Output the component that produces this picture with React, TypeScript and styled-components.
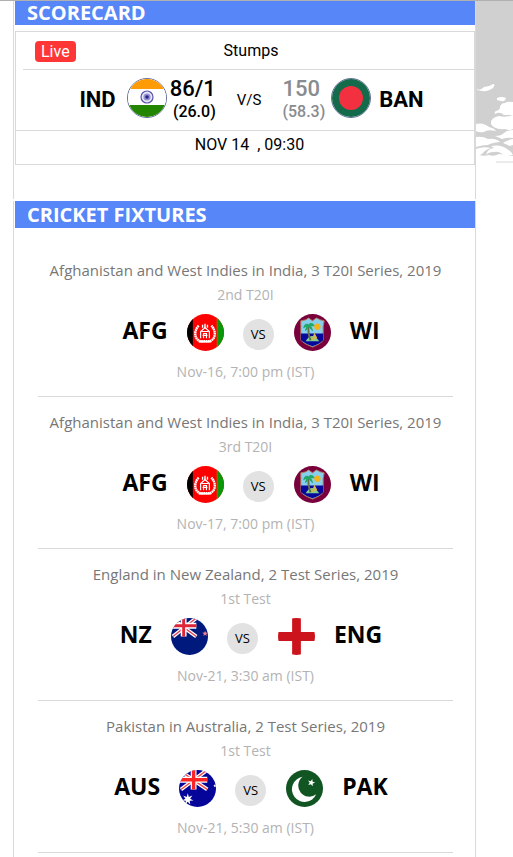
import React from 'react';
import styled, { createGlobalStyle } from 'styled-components';

const GlobalStyle = createGlobalStyle`
  * { box-sizing: border-box; }
  body {
    margin: 0;
    background: #fff;
    color: #000;
    font-family: 'Open Sans', 'Noto Sans', sans-serif;
  }
  h2, h3, p { margin: 0; }
`;

const Page = styled.div`
  display: grid;
  grid-template-columns: minmax(0, 1fr) 37px;
  align-items: start;
  border-top: 1px solid #b0b0b0;
  padding-left: 13px;
`;

const Column = styled.main`
  display: flex;
  flex-direction: column;
  gap: 2px;
`;

const Panel = styled.section`
  border: solid #d9d9d9;
  border-width: 0 1px;
  padding-left: 1px;
`;

const PanelTitle = styled.h2<{ $short?: boolean }>`
  padding-left: 12px;
  background: #5686f7;
  color: #fff;
  font-size: 20px;
  font-weight: 700;
  line-height: ${(p) => (p.$short ? 24 : 27)}px;
`;

const ScoreBox = styled.div`
  margin: 6px 0 34px;
  border: 1px solid #d9d9d9;
  font-family: Roboto, 'Liberation Sans', sans-serif;
  font-size: 16px;
`;

const StatusRow = styled.div`
  display: grid;
  grid-template-columns: 1fr auto 1fr;
  align-items: center;
  height: 38px;
  margin-left: 7px;
  padding: 0 7px 0 12px;
  border-bottom: 1px solid #d9d9d9;
`;

const LiveTag = styled.span`
  justify-self: start;
  margin-top: 2px;
  padding: 0 6px;
  border-radius: 4px;
  background: #ff3636;
  color: #fff;
  line-height: 21px;
`;

const ScoreRow = styled.div`
  display: flex;
  align-items: center;
  justify-content: center;
  height: 61px;
  padding: 0 0 4px 16px;
  border-bottom: 1px solid #d9d9d9;
`;

const ScoreTeam = styled.strong`
  margin: 4px 11px 0 8px;
  font-size: 22px;
  font-weight: 700;
  line-height: 24px;
`;

const Score = styled.div<{ $past?: boolean }>`
  display: flex;
  flex-direction: column;
  align-items: ${(p) => (p.$past ? 'flex-start' : 'flex-end')};
  margin: 4px ${(p) => (p.$past ? 6 : 0)}px 0 3px;
  color: ${(p) => (p.$past ? '#888b8f' : '#000')};
  font-size: 22px;
  font-weight: 500;
  line-height: 24px;
`;

const Overs = styled.span`
  font-size: 16px;
  line-height: 22px;
`;

const Against = styled.span`
  margin: 4px 18px 0 21px;
  font-size: 15px;
`;

const MatchDate = styled.p`
  padding: 2px 0 7px 9px;
  text-align: center;
  line-height: 24px;
  white-space: pre-wrap;
`;

const Fixtures = styled.div`
  padding: 17px 22px 16px 23px;
`;

const Fixture = styled.article`
  height: 152px;
  padding-top: 12px;
  border-bottom: 1px solid #d9d9d9;
  text-align: center;
`;

const Series = styled.h3`
  margin-bottom: 1px;
  color: #777;
  font-size: 15px;
  font-weight: 400;
  line-height: 26px;
  white-space: nowrap;
`;

const Detail = styled.p`
  color: #b3b3b3;
  font-size: 14px;
  line-height: 22px;
`;

const Teams = styled.div`
  display: flex;
  align-items: center;
  justify-content: center;
  gap: 19px;
  padding: 7px 0 10px 11px;
`;

const Team = styled.strong`
  padding-bottom: 4px;
  font-size: 23px;
  font-weight: 700;
  line-height: 34px;
`;

const Versus = styled.span`
  width: 31px;
  margin: 4px 1px 0 0;
  border-radius: 50%;
  background: #e2e2e2;
  font-size: 13px;
  line-height: 31px;
`;

const FlagSvg = styled.svg<{ $size: number; $ring?: boolean }>`
  flex: none;
  width: ${(p) => p.$size}px;
  height: ${(p) => p.$size}px;
  border: ${(p) => (p.$ring ? '1px solid #64709a' : '0')};
  border-radius: 50%;
  overflow: hidden;
`;

const SplashSvg = styled.svg`
  display: block;
  width: 37px;
  height: 166px;
`;

type Code = 'IND' | 'BAN' | 'AFG' | 'WI' | 'NZ' | 'ENG' | 'AUS' | 'PAK';

const star = (x: number, y: number, r: number, n = 5) =>
  Array.from({ length: n * 2 }, (_, i) => {
    const a = (Math.PI * i) / n - Math.PI / 2;
    const k = i % 2 ? r * 0.42 : r;
    return `${x + k * Math.cos(a)},${y + k * Math.sin(a)}`;
  }).join(' ');

const flags: Record<Code, React.ReactNode> = {
  IND: (
    <>
      <rect width="38" height="38" fill="#fff" />
      <rect width="38" height="10" fill="#ff9b05" />
      <rect y="26" width="38" height="12" fill="#248500" />
      <circle cx="19" cy="18" r="6" fill="#e7e7f6" stroke="#5552a8" strokeWidth="1.2" />
      <circle cx="19" cy="18" r="3.6" fill="#9492cf" />
      <circle cx="19" cy="18" r="1.8" fill="#29258b" />
    </>
  ),
  BAN: (
    <>
      <rect width="38" height="38" fill="#146b4b" />
      <circle cx="19" cy="19" r="12" fill="#f3303f" />
    </>
  ),
  AFG: (
    <>
      <rect width="38" height="38" fill="#f00" />
      <rect width="6" height="38" fill="#000" />
      <rect x="31" width="7" height="38" fill="#0a970a" />
      <path d="M31 0V38" stroke="#a66c00" strokeWidth="1" />
      <g fill="none" stroke="#fff">
        <path d="M12 12C7 17 7 26 14 28H23C30 26 30 17 25 12" strokeWidth="2.4" strokeDasharray="1.8 .4" />
        <path d="M14 25V18L18.5 14L23 18V25M15 18H22M16 22H21M17 25V20H20V25" strokeWidth="1.2" />
        <path d="M16 14V11M18.5 15V10M21 14V11M12 28.5H25" strokeWidth="1.4" />
      </g>
    </>
  ),
  WI: (
    <>
      <rect width="38" height="38" fill="#79003d" />
      <path d="M7 7L12 6L15 4L19 7L23 4L27 6L31 7L30 13V27Q27 31 19 34Q11 31 7 27V13Z" fill="#87ceef" stroke="#b7744c" />
      <path d="M7 20H30V27Q26 31 19 33Q12 31 7 27Z" fill="#08089c" />
      <path d="M12 28Q18 17 26 28Z" fill="#80cf91" />
      <path d="M18 27L21 19L24 25Z" fill="#d6b64c" />
      <path d="M15 12Q14 20 17 27" fill="none" stroke="#6a7043" strokeWidth="2" />
      <path d="M10 14Q11 9 15 11Q18 8 21 12L17 12L19 17L15 13L12 17L13 12Z" fill="#21a766" stroke="#21a766" />
      <circle cx="24" cy="13" r="3.2" fill="#f5b318" />
    </>
  ),
  NZ: (
    <>
      <rect width="38" height="38" fill="#00197d" />
      <path d="M0 0L26 19M26 0L2 19" stroke="#fff" strokeWidth="4" />
      <path d="M0 0L26 19M26 0L2 19" stroke="#df4458" strokeWidth="1.5" />
      <path d="M2 8H26M13 0V19" stroke="#fff" strokeWidth="6" />
      <path d="M2 8H26M13 0V19" stroke="#df2638" strokeWidth="3" />
      <polygon points={star(35, 16, 3)} fill="#ef8190" />
    </>
  ),
  ENG: (
    <>
      <rect width="38" height="38" fill="#fff" />
      <path d="M19 0V38M0 19H38" stroke="#cc141d" strokeWidth="9" />
    </>
  ),
  AUS: (
    <>
      <rect width="38" height="38" fill="#05059a" />
      <path d="M1 1L29 20M29 0L2 20" stroke="#fff" strokeWidth="4" />
      <path d="M1 1L29 20M29 0L2 20" stroke="#f34a4a" strokeWidth="1.5" />
      <path d="M0 10H29M15 0V20" stroke="#fff" strokeWidth="6" />
      <path d="M0 10H29M15 0V20" stroke="#fa2525" strokeWidth="3.5" />
      <polygon points={star(9, 30, 6, 7)} fill="#fff" />
      <polygon points={star(37, 16, 2)} fill="#fff" />
    </>
  ),
  PAK: (
    <>
      <rect width="38" height="38" fill="#115523" />
      <path d="M17 7A13 13 0 1 0 31 25A11 11 0 1 1 17 7Z" fill="#fff" />
      <polygon points={star(26, 13, 4)} fill="#fff" transform="rotate(15 26 13)" />
    </>
  ),
};

const Flag = ({ code, size = 37, ring }: { code: Code; size?: number; ring?: boolean }) => (
  <FlagSvg $size={size} $ring={ring} viewBox="0 0 38 38" role="img" aria-label={code}>
    {flags[code]}
  </FlagSvg>
);

const Splash = () => (
  <SplashSvg viewBox="0 1 37 166" aria-hidden="true">
    <rect width="37" height="166" fill="#d0d0d0" />
    <g fill="#fff">
      <path d="M1 89Q4 91 8 87Q13 87 17 84Q20 84 17 88Q11 93 1 90Z" />
      <path d="M21 98Q26 96 30 98Q29 102 25 101L21 100Z" />
      <path d="M37 102Q31 101 29 103Q25 103 24 107Q24 110 20 111Q18 112 19 114Q24 111 28 115H37Z" />
      <path d="M37 115Q29 118 23 116Q14 118 15 124Q18 130 29 129Q34 131 37 129Z" />
      <path d="M0 124Q7 122 13 127Q18 128 20 131Q11 129 8 132Q3 133 0 131Z" />
      <path d="M37 130Q31 130 28 133Q25 136 19 136L26 139Q32 137 37 138Z" />
      <path d="M0 137Q7 136 12 139Q20 138 24 142Q15 143 12 145Q6 145 0 147Z" />
      <path d="M37 139Q31 140 27 143L34 146L37 145Z" />
      <path d="M0 149Q7 146 15 148Q9 150 7 153Q4 156 0 155Z" />
      <path d="M15 146Q25 144 31 149Q35 151 37 155L28 156Q24 151 18 152Q12 152 10 155Q11 149 18 148Z" />
      <path d="M0 154Q6 157 13 155Q18 157 23 154L37 156V168H0Z" />
    </g>
    <path d="M20 162H37" fill="none" stroke="#d8d8d8" />
  </SplashSvg>
);

const fixtures: { series: string; match: string; home: Code; away: Code; time: string }[] = [
  { series: 'Afghanistan and West Indies in India, 3 T20I Series, 2019', match: '2nd T20I', home: 'AFG', away: 'WI', time: 'Nov-16, 7:00 pm (IST)' },
  { series: 'Afghanistan and West Indies in India, 3 T20I Series, 2019', match: '3rd T20I', home: 'AFG', away: 'WI', time: 'Nov-17, 7:00 pm (IST)' },
  { series: 'England in New Zealand, 2 Test Series, 2019', match: '1st Test', home: 'NZ', away: 'ENG', time: 'Nov-21, 3:30 am (IST)' },
  { series: 'Pakistan in Australia, 2 Test Series, 2019', match: '1st Test', home: 'AUS', away: 'PAK', time: 'Nov-21, 5:30 am (IST)' },
];

export default function App() {
  return (
    <Page>
      <GlobalStyle />
      <Column>
        <Panel>
          <PanelTitle $short>SCORECARD</PanelTitle>
          <ScoreBox>
            <StatusRow>
              <LiveTag>Live</LiveTag>
              <span>Stumps</span>
            </StatusRow>
            <ScoreRow>
              <ScoreTeam>IND</ScoreTeam>
              <Flag code="IND" size={40} ring />
              <Score>
                86/1
                <Overs>(26.0)</Overs>
              </Score>
              <Against>V/S</Against>
              <Score $past>
                150
                <Overs>(58.3)</Overs>
              </Score>
              <Flag code="BAN" size={40} ring />
              <ScoreTeam>BAN</ScoreTeam>
            </ScoreRow>
            <MatchDate>{'NOV 14  , 09:30'}</MatchDate>
          </ScoreBox>
        </Panel>
        <Panel>
          <PanelTitle>CRICKET FIXTURES</PanelTitle>
          <Fixtures>
            {fixtures.map((f) => (
              <Fixture key={f.time}>
                <Series>{f.series}</Series>
                <Detail>{f.match}</Detail>
                <Teams>
                  <Team>{f.home}</Team>
                  <Flag code={f.home} />
                  <Versus>VS</Versus>
                  <Flag code={f.away} />
                  <Team>{f.away}</Team>
                </Teams>
                <Detail>{f.time}</Detail>
              </Fixture>
            ))}
          </Fixtures>
        </Panel>
      </Column>
      <Splash />
    </Page>
  );
}
